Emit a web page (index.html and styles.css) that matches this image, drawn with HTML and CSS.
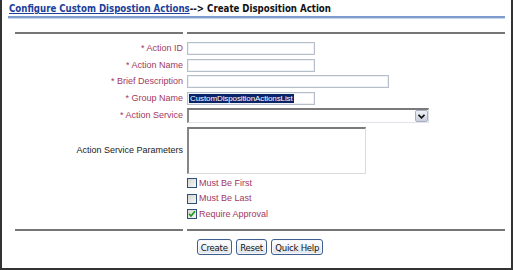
FILE: index.html
```html
<!DOCTYPE html>
<html>
<head>
<meta charset="utf-8">
<link rel="stylesheet" href="styles.css">
</head>
<body>
<div class="frame">
  <div class="header">
    <a class="crumb" href="#">Configure Custom Dispostion Actions</a><span class="current">--&gt; Create Disposition Action</span>
  </div>
  <div class="form">
    <div class="sep sep-top"></div><div class="sep sep-top"></div>

    <div class="lbl req">* Action ID</div>
    <div class="field"><div class="txt w-short"></div></div>

    <div class="lbl req">* Action Name</div>
    <div class="field"><div class="txt w-short"></div></div>

    <div class="lbl req">* Brief Description</div>
    <div class="field"><div class="txt w-long"></div></div>

    <div class="lbl req">* Group Name</div>
    <div class="field"><div class="txt w-short"><span class="selected">CustomDispositionActionsList</span></div></div>

    <div class="lbl req">* Action Service</div>
    <div class="field">
      <div class="select">
        <span class="drop">
          <svg width="7" height="5" viewBox="0 0 7 5"><path d="M0.5 0.8 L3.5 3.8 L6.5 0.8" fill="none" stroke="#111" stroke-width="1.6"/></svg>
        </span>
      </div>
    </div>

    <div class="lbl plain">Action Service Parameters</div>
    <div class="field"><div class="area"></div></div>

    <div class="lbl"></div>
    <div class="field check-row"><span class="box"></span><span class="check-lbl">Must Be First</span></div>

    <div class="lbl"></div>
    <div class="field check-row"><span class="box"></span><span class="check-lbl">Must Be Last</span></div>

    <div class="lbl"></div>
    <div class="field check-row"><span class="box checked"><svg width="8" height="8" viewBox="0 0 8 8"><path d="M1 3.8 L3 6 L7 1.2" fill="none" stroke="#1a9a1a" stroke-width="1.6"/></svg></span><span class="check-lbl">Require Approval</span></div>

    <div class="sep sep-bottom"></div><div class="sep sep-bottom"></div>
  </div>
  <div class="buttons">
    <button class="btn">Create</button>
    <button class="btn">Reset</button>
    <button class="btn">Quick Help</button>
  </div>
</div>
</body>
</html>
```
FILE: styles.css
```css
html, body {
  margin: 0;
  padding: 0;
  background: #ffffff;
}

.frame {
  box-sizing: border-box;
  width: 513px;
  height: 270px;
  border-left: 2px solid #333333;
  border-right: 2px solid #333333;
  border-bottom: 2px solid #333333;
  background: #ffffff;
}

.header {
  box-sizing: border-box;
  height: 18px;
  margin: 0 6px 0 6px;
  padding: 3px 0 0 1px;
  border-bottom: 2px solid #7d9bcc;
  box-shadow: 0 1px 0 #c9d6ec;
  font-family: "DejaVu Sans", sans-serif;
  font-stretch: condensed;
  font-weight: bold;
  font-size: 9.6px;
  line-height: 12px;
  white-space: nowrap;
}

.crumb {
  color: #213f99;
  text-decoration: underline;
}

.current {
  color: #111111;
}

.form {
  display: grid;
  grid-template-columns: 168px 318px;
  column-gap: 4px;
  row-gap: 3.5px;
  margin: 14px 0 0 13px;
  align-items: center;
}

.sep {
  height: 2px;
  background: #767676;
}

.sep-top {
  margin-bottom: 4.5px;
}

.sep-bottom {
  margin-top: 5px;
}

.lbl {
  text-align: right;
  font-family: "Liberation Sans", Arial, sans-serif;
  font-size: 9px;
  line-height: 11px;
  white-space: nowrap;
}

.req {
  color: #a3385e;
}

.plain {
  color: #222222;
}

.field {
  display: flex;
  align-items: center;
}

.txt {
  box-sizing: border-box;
  height: 13px;
  border: 1px solid #b6bec9;
  box-shadow: inset 0 0 0 1px #eef1f4;
  background: #ffffff;
  padding: 1px 0 0 1px;
  font-family: "Liberation Sans", Arial, sans-serif;
  font-size: 8px;
  line-height: 9px;
  overflow: hidden;
  white-space: nowrap;
}

.w-short { width: 128px; }
.w-long { width: 202px; }

.selected {
  background: #0a246a;
  color: #ffffff;
  padding: 0 1px;
  letter-spacing: -0.1px;
}

.select {
  box-sizing: border-box;
  position: relative;
  width: 242px;
  height: 15px;
  border-style: solid;
  border-width: 2px 1px 1px 2px;
  border-color: #7a7a7a #dddde4 #e4e0ec #8a8a8a;
  background: #ffffff;
}

.drop {
  position: absolute;
  right: 0;
  top: 0;
  box-sizing: border-box;
  width: 13px;
  height: 12px;
  border: 1px solid #a7b0c0;
  border-radius: 2px;
  background: linear-gradient(#eef1f6, #c9d0dc);
  display: flex;
  align-items: center;
  justify-content: center;
}

.area {
  box-sizing: border-box;
  width: 179px;
  height: 47px;
  border-style: solid;
  border-width: 2px 1px 1px 2px;
  border-color: #7a7a7a #dcdcdc #dcdcdc #868686;
  background: #ffffff;
}

.check-row {
  height: 12px;
}

.box {
  box-sizing: border-box;
  width: 10px;
  height: 10px;
  border: 1px solid #2d4f7c;
  background: linear-gradient(135deg, #d6d6d0, #f6f6f4);
  display: flex;
  align-items: center;
  justify-content: center;
  flex: none;
}

.check-lbl {
  margin-left: 2px;
  color: #a3385e;
  font-family: "Liberation Sans", Arial, sans-serif;
  font-size: 9px;
  line-height: 11px;
  white-space: nowrap;
}

.buttons {
  display: flex;
  justify-content: center;
  gap: 4.5px;
  width: 490px;
  margin: 8.5px 0 0 13px;
}

.btn {
  box-sizing: border-box;
  height: 16px;
  margin: 0;
  padding: 0 3px;
  border: 1px solid #3f5f8f;
  border-radius: 3px;
  background: linear-gradient(#ffffff, #dfe4ec);
  box-shadow: inset 0 0 0 1px #f4f6fa;
  color: #111111;
  font-family: "DejaVu Sans", sans-serif;
  font-stretch: condensed;
  font-size: 9.5px;
  letter-spacing: -0.25px;
  line-height: 13px;
}
```
